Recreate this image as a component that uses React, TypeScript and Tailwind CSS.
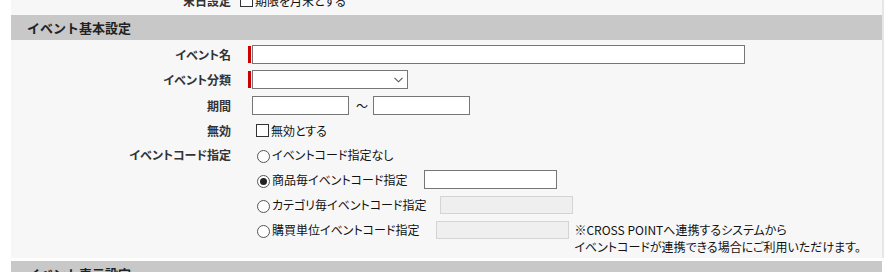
import type { ReactNode } from 'react'

function Checkbox() {
  return <span className="w-[13px] h-[13px] shrink-0 border border-[#333] bg-white" />
}

function Radio({ checked }: { checked?: boolean }) {
  return (
    <span className="mt-[4px] flex h-[13px] w-[13px] shrink-0 items-center justify-center rounded-full border border-[#555] bg-white">
      {checked && <span className="h-[7px] w-[7px] rounded-full bg-[#222]" />}
    </span>
  )
}

function Field({ label, required, h = 'h-[25px]', children }: {
  label: string; required?: boolean; h?: string; children: ReactNode
}) {
  return (
    <div className={`flex items-center ${h}`}>
      <div className="w-[220px] shrink-0 text-right font-bold text-[#333]">{label}</div>
      <div className="ml-[17px] flex items-center">
        <span className={required ? 'mr-[1px] h-[17px] w-[3px] bg-[#cc0000]' : 'mr-[1px] w-[3px]'} />
        {children}
      </div>
    </div>
  )
}

function SectionHeader({ title }: { title: string }) {
  return (
    <div className="flex h-[25px] items-center bg-[#c8c8c8] pl-[16px] text-[13px] font-bold text-[#222] [font-feature-settings:normal]">
      {title}
    </div>
  )
}

const input = 'h-[19px] border border-[#767676] bg-white'
const disabled = 'h-[18px] w-[133px] border border-[#d4d4d4] bg-[#efefef]'

export default function App() {
  return (
    <div className="h-[272px] w-[891px] overflow-hidden bg-white font-['Noto_Sans_CJK_JP','Noto_Sans',sans-serif] text-[12px] leading-[17px] text-[#111] [font-feature-settings:'palt']">
      <div className="ml-[11px] h-full w-[873px] border-r-2 border-[#e6e6e6] bg-[#f7f7f7]">
        {/* previous section, scrolled mostly out of view */}
        <div className="-mt-[14px] flex h-[29px] items-center">
          <div className="w-[220px] text-right font-bold text-[#333]">末日設定</div>
          <div className="ml-[9px] flex items-center gap-[2px]">
            <Checkbox />
            <span>期限を月末とする</span>
          </div>
        </div>

        <SectionHeader title="イベント基本設定" />

        <div className="pt-[2px]">
          <Field label="イベント名" required>
            <div className={`${input} w-[493px]`} />
          </Field>
          <Field label="イベント分類" required>
            <div className={`${input} flex w-[156px] items-center justify-end pr-[4px]`}>
              <svg width="9" height="6" viewBox="0 0 9 6" className="text-[#555]">
                <path d="M0.5 0.8 L4.5 4.8 L8.5 0.8" fill="none" stroke="currentColor" strokeWidth="1.1" />
              </svg>
            </div>
          </Field>
          <Field label="期間" h="h-[26px]">
            <div className={`${input} w-[97px]`} />
            <span className="ml-[7px] mr-[6px] w-[11px] text-center">〜</span>
            <div className={`${input} w-[97px]`} />
          </Field>
          <Field label="無効" h="h-[24px]">
            <div className="ml-[4px] flex items-center gap-[2px]">
              <Checkbox />
              <span>無効とする</span>
            </div>
          </Field>

          <div className="flex">
            <div className="w-[220px] shrink-0 pt-[4px] text-right font-bold text-[#333]">イベントコード指定</div>
            <div className="ml-[26px] flex flex-col">
              <div className="flex h-[25px] items-center gap-[2px]">
                <Radio />
                <span>イベントコード指定なし</span>
              </div>
              <div className="flex h-[25px] items-center gap-[2px]">
                <Radio checked />
                <span>商品毎イベントコード指定</span>
                <div className={`${input} ml-[15px] w-[133px]`} />
              </div>
              <div className="flex h-[25px] items-center gap-[2px]">
                <Radio />
                <span>カテゴリ毎イベントコード指定</span>
                <div className={`${disabled} ml-[12px]`} />
              </div>
              <div className="flex items-start gap-[2px]">
                <div className="flex h-[25px] items-center gap-[2px]">
                  <Radio />
                  <span>購買単位イベントコード指定</span>
                  <div className={`${disabled} ml-[15px]`} />
                </div>
                <div className="ml-[3px] pt-[4px] text-[#111]">
                  <div>※CROSS POINTへ連携するシステムから</div>
                  <div>イベントコードが連携できる場合にご利用いただけます。</div>
                </div>
              </div>
            </div>
          </div>
        </div>

        <div className="mt-[6px]">
          <SectionHeader title="イベント表示設定" />
        </div>
      </div>
    </div>
  )
}
